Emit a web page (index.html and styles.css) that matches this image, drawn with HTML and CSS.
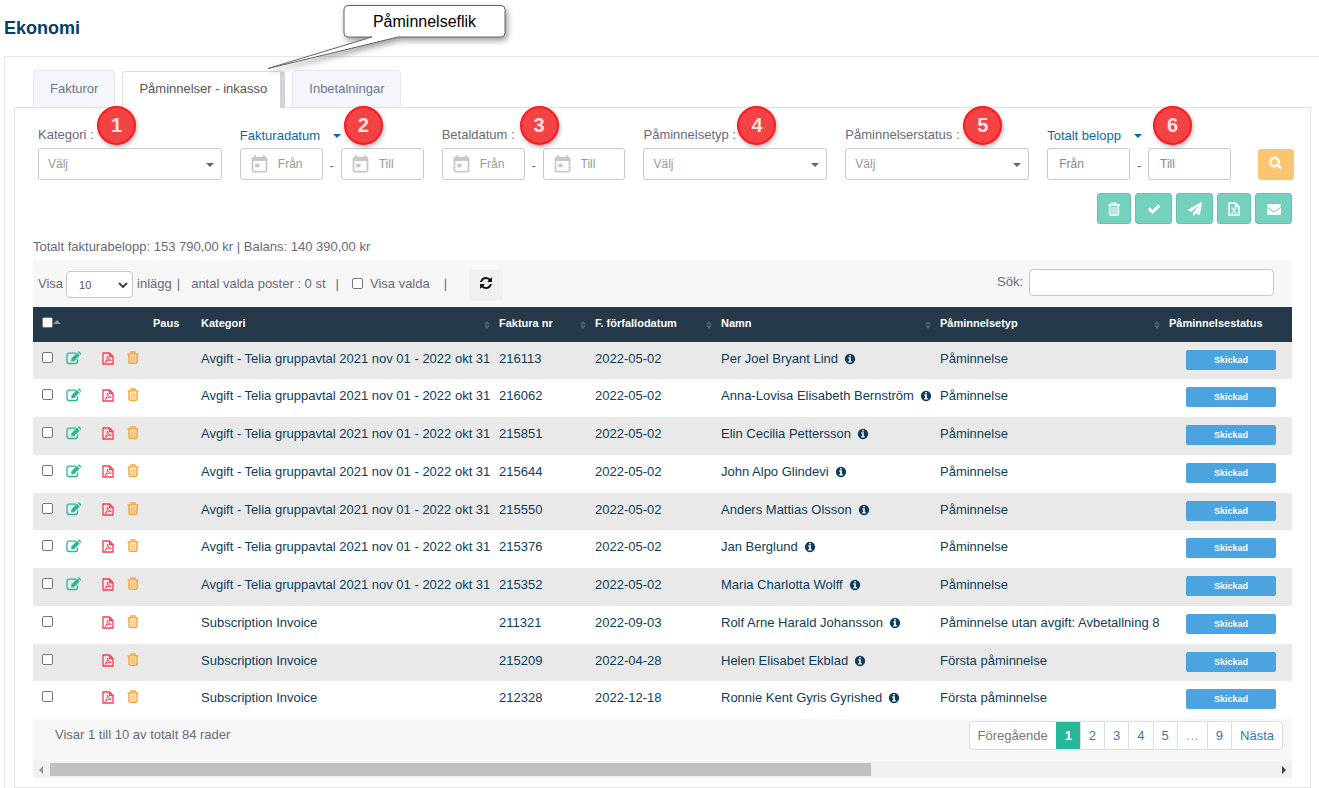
FILE: index.html
```html
<!DOCTYPE html>
<html lang="sv">
<head>
<meta charset="utf-8">
<title>Ekonomi</title>
<link rel="stylesheet" href="styles.css">
</head>
<body>
<svg class="sprite" aria-hidden="true">
  <symbol id="i-search" viewBox="0 0 1792 1792"><path stroke="currentColor" stroke-width="90" d="M1216 832q0-185-131.500-316.500T768 384 451.500 515.500 320 832t131.500 316.500T768 1280t316.500-131.500T1216 832zm512 832q0 52-38 90t-90 38q-54 0-90-38l-343-342q-179 124-399 124-143 0-273.500-55.500t-225-150-150-225T64 832t55.500-273.500 150-225 225-150T768 128t273.500 55.500 225 150 150 225T1472 832q0 220-124 399l343 343q37 37 37 90z"/></symbol>
  <symbol id="i-check" viewBox="0 0 1792 1792"><path d="M1671 566q0 40-28 68l-724 724-136 136q-28 28-68 28t-68-28l-136-136-362-362q-28-28-28-68t28-68l136-136q28-28 68-28t68 28l294 295 656-657q28-28 68-28t68 28l136 136q28 28 28 68z"/></symbol>
  <symbol id="i-mail" viewBox="0 0 1792 1792"><path d="M1792 710v794q0 66-47 113t-113 47H160q-66 0-113-47T0 1504V710q44 49 101 87 362 246 497 345 57 42 92.500 65.500t94.500 48 110 24.500h2q51 0 110-24.500t94.500-48 92.500-65.500q170-123 498-345 57-39 100-87zm0-294q0 79-49 151t-122 123q-376 261-468 325-10 7-42.500 30.500t-54 38-52 32.500-57.500 27-50 9h-2q-23 0-50-9t-57.500-27-52-32.500-54-38T639 1015q-91-64-262-182.500T172 690q-62-42-117-115.500T0 438q0-78 41.500-130T160 256h1472q65 0 112.500 47t47.500 113z"/></symbol>
  <symbol id="i-trash" viewBox="0 0 12 13"><path d="M.5 2.800h11M4 2.500V1h4v1.500" fill="none" stroke="currentColor" stroke-width="1.300"/><path d="M2 3v8q0 1.200 1.200 1.200h5.600Q10 12.200 10 11V3" fill="none" stroke="currentColor" stroke-width="1.500"/><path d="M4.200 4.500V11M6 4.500V11M7.800 4.500V11" fill="none" stroke="currentColor" stroke-width=".9"/></symbol>
  <symbol id="i-plane" viewBox="0 0 1792 1792"><path d="M1764 11q33 24 27 64l-256 1536q-5 29-32 45-14 8-31 8-11 0-24-5l-453-185-242 295q-18 23-49 23-13 0-22-4-19-7-30.500-23.500T640 1728v-349l864-1059-1069 925-395-162q-37-14-40-55-2-40 32-59L1696 9q15-9 32-9 20 0 36 11z"/></symbol>
  <symbol id="i-refresh" viewBox="0 0 1792 1792"><path d="M1639 1056q0 5-1 7-64 268-268 434.500T892 1664q-146 0-282.500-55T366 1452l-129 129q-19 19-45 19t-45-19-19-45v-448q0-26 19-45t45-19h448q26 0 45 19t19 45-19 45l-137 137q71 66 161 102t187 36q134 0 250-65t186-179q11-17 53-117 8-23 30-23h192q13 0 22.500 9.500t9.500 22.500zm25-800v448q0 26-19 45t-45 19h-448q-26 0-45-19t-19-45 19-45l138-138q-148-137-349-137-134 0-250 65T460 628q-11 17-53 117-8 23-30 23H178q-13 0-22.500-9.500T146 736v-7q65-268 270-434.500T896 128q146 0 284 55.500T1425 340l130-129q19-19 45-19t45 19 19 45z"/></symbol>
  <symbol id="i-info" viewBox="0 0 1792 1792"><path d="M1152 1376v-160q0-14-9-23t-23-9h-96V672q0-14-9-23t-23-9H672q-14 0-23 9t-9 23v160q0 14 9 23t23 9h96v320h-96q-14 0-23 9t-9 23v160q0 14 9 23t23 9h448q14 0 23-9t9-23zm-128-896V320q0-14-9-23t-23-9H800q-14 0-23 9t-9 23v160q0 14 9 23t23 9h192q14 0 23-9t9-23zm640 416q0 209-103 385.500T1281.500 1561 896 1664t-385.500-103T231 1281.500 128 896t103-385.500T510.500 231 896 128t385.500 103T1561 510.500 1664 896z"/></symbol>
  <symbol id="i-edit" viewBox="0 0 15 14"><path d="M10 2.200H3Q1 2.200 1 4v6.500q0 2 2 2h6.500q2 0 2-2V8.500" fill="none" stroke="currentColor" stroke-width="1.300"/><path d="M5.300 10.200V7.500L11 1.800l2.700 2.700L8 10.200zM11.700 1.100l.6-.6q.5-.4 1 0L15 2.200q.4.500 0 1l-.6.600z"/></symbol>
  <symbol id="i-pdf" viewBox="0 0 12 13"><path d="M1 1h6.500L11 4.500V12H1zM7.500 1v3.500H11" fill="none" stroke="currentColor" stroke-width="1.300"/><path d="M5.300 4c.8 2.300 2 4 4 4.300-2-.3-4.800.5-6.500 2.200C4.500 9.500 5.900 6.200 5.300 4z" fill="none" stroke="currentColor" stroke-width=".9"/></symbol>
  <symbol id="i-excel" viewBox="0 0 12 14"><path d="M1 1h6.500L11 4.500V13H1zM7.500 1v3.500H11" fill="none" stroke="currentColor" stroke-width="1.500"/><path d="M3.200 6h2M6.800 6h2M3.200 11h2M6.800 11h2M4.200 6l3.600 5M7.800 6l-3.600 5" fill="none" stroke="currentColor" stroke-width="1.200"/></symbol>
  <symbol id="i-cal" viewBox="0 0 24 24"><path d="M19 3h-1V1h-2v2H8V1H6v2H5c-1.100 0-2 .9-2 2v14a2 2 0 0 0 2 2h14a2 2 0 0 0 2-2V5a2 2 0 0 0-2-2zm0 16H5V8h14v11zM7 11h5v4H7z"/></symbol>
  <symbol id="i-down" viewBox="0 0 8 4"><path d="M0 0h8L4 4z"/></symbol>
  <symbol id="i-up" viewBox="0 0 8 4"><path d="M0 4h8L4 0z"/></symbol>
  <symbol id="i-sort" viewBox="0 0 6 8"><path d="M0 3.500h6L3 0zM0 4.500h6L3 8z"/></symbol>
  <symbol id="i-chev" viewBox="0 0 10 6"><path d="M1 1l4 4 4-4" fill="none" stroke="currentColor" stroke-width="2"/></symbol>
</svg>

<header class="page-head"><h1>Ekonomi</h1></header>

<div class="callout">
  <svg class="callout-shape" viewBox="0 0 260 80" aria-hidden="true"><path d="M88 5.500H241q4 0 4 4V33q0 4-4 4H138L8 68.500 112 37H88q-4 0-4-4V9.500q0-4 4-4z"/></svg>
  <span class="callout-text">Påminnelseflik</span>
</div>

<main class="outer">
  <nav class="tabs">
    <a class="tab" href="#">Fakturor</a>
    <a class="tab active" href="#">Påminnelser - inkasso</a>
    <a class="tab" href="#">Inbetalningar</a>
  </nav>

  <section class="panel">
    <form class="filters">
      <div class="filter">
        <label for="kat">Kategori :</label><span class="pin pin-1">1</span>
        <div class="pick"><select id="kat"><option>Välj</option></select><svg><use href="#i-down"/></svg></div>
      </div>
      <div class="filter">
        <button type="button" class="switch">Fakturadatum<svg><use href="#i-down"/></svg></button><span class="pin pin-2">2</span>
        <div class="range">
          <div class="date"><svg><use href="#i-cal"/></svg><input aria-label="Fakturadatum från" placeholder="Från"></div>
          <span class="dash">-</span>
          <div class="date"><svg><use href="#i-cal"/></svg><input aria-label="Fakturadatum till" placeholder="Till"></div>
        </div>
      </div>
      <div class="filter">
        <label for="bet">Betaldatum :</label><span class="pin pin-3">3</span>
        <div class="range">
          <div class="date"><svg><use href="#i-cal"/></svg><input id="bet" placeholder="Från"></div>
          <span class="dash">-</span>
          <div class="date"><svg><use href="#i-cal"/></svg><input aria-label="Betaldatum till" placeholder="Till"></div>
        </div>
      </div>
      <div class="filter">
        <label for="typ">Påminnelsetyp :</label><span class="pin pin-4">4</span>
        <div class="pick"><select id="typ"><option>Välj</option></select><svg><use href="#i-down"/></svg></div>
      </div>
      <div class="filter">
        <label for="status">Påminnelserstatus :</label><span class="pin pin-5">5</span>
        <div class="pick"><select id="status"><option>Välj</option></select><svg><use href="#i-down"/></svg></div>
      </div>
      <div class="filter">
        <button type="button" class="switch">Totalt belopp<svg><use href="#i-down"/></svg></button><span class="pin pin-6">6</span>
        <div class="range amount">
          <div class="date"><input aria-label="Belopp från" placeholder="Från"></div>
          <span class="dash">-</span>
          <div class="date"><input aria-label="Belopp till" placeholder="Till"></div>
        </div>
      </div>
      <button type="button" class="search-btn" aria-label="Sök"><svg><use href="#i-search"/></svg></button>
    </form>

    <div class="actions">
      <button type="button" aria-label="Ta bort"><svg><use href="#i-trash"/></svg></button>
      <button type="button" class="wide" aria-label="Godkänn"><svg><use href="#i-check"/></svg></button>
      <button type="button" class="wide" aria-label="Skicka"><svg><use href="#i-plane"/></svg></button>
      <button type="button" aria-label="Excel"><svg><use href="#i-excel"/></svg></button>
      <button type="button" class="wide" aria-label="E-post"><svg><use href="#i-mail"/></svg></button>
    </div>

    <p class="summary">Totalt fakturabelopp: 153 790,00 kr | Balans: 140 390,00 kr</p>

    <div class="grid">
      <div class="toolbar">
        <label for="len">Visa</label>
        <div class="length"><select id="len"><option>10</option></select><svg><use href="#i-chev"/></svg></div>
        <span class="entries">inlägg</span><span>|</span>
        <span class="count">antal valda poster : 0 st</span><span class="bar">|</span>
        <label class="only"><input type="checkbox">Visa valda</label><span class="bar">|</span>
        <button type="button" class="reload" aria-label="Uppdatera"><svg><use href="#i-refresh"/></svg></button>
        <label class="find">Sök:<input type="search"></label>
      </div>

      <table>
        <colgroup><col class="c-check"><col class="c-edit"><col class="c-pdf"><col class="c-del"><col class="c-paus"><col class="c-kat"><col class="c-nr"><col class="c-date"><col class="c-name"><col class="c-typ"><col class="c-status"></colgroup>
        <thead>
          <tr>
            <th class="all"><input type="checkbox" aria-label="Välj alla"><svg><use href="#i-up"/></svg></th><th></th><th></th><th></th>
            <th>Paus</th>
            <th>Kategori<svg class="sort"><use href="#i-sort"/></svg></th>
            <th>Faktura nr<svg class="sort"><use href="#i-sort"/></svg></th>
            <th>F. förfallodatum<svg class="sort"><use href="#i-sort"/></svg></th>
            <th>Namn<svg class="sort"><use href="#i-sort"/></svg></th>
            <th>Påminnelsetyp<svg class="sort"><use href="#i-sort"/></svg></th>
            <th>Påminnelsestatus</th>
          </tr>
        </thead>
        <tbody>
          <tr><td><input type="checkbox" aria-label="Välj 216113"></td><td><svg class="edit"><use href="#i-edit"/></svg></td><td><svg class="pdf"><use href="#i-pdf"/></svg></td><td><svg class="del"><use href="#i-trash"/></svg></td><td></td><td>Avgift - Telia gruppavtal 2021 nov 01 - 2022 okt 31</td><td>216113</td><td>2022-05-02</td><td>Per Joel Bryant Lind<svg class="info"><use href="#i-info"/></svg></td><td>Påminnelse</td><td><span class="badge">Skickad</span></td></tr>
          <tr><td><input type="checkbox" aria-label="Välj 216062"></td><td><svg class="edit"><use href="#i-edit"/></svg></td><td><svg class="pdf"><use href="#i-pdf"/></svg></td><td><svg class="del"><use href="#i-trash"/></svg></td><td></td><td>Avgift - Telia gruppavtal 2021 nov 01 - 2022 okt 31</td><td>216062</td><td>2022-05-02</td><td>Anna-Lovisa Elisabeth Bernström<svg class="info"><use href="#i-info"/></svg></td><td>Påminnelse</td><td><span class="badge">Skickad</span></td></tr>
          <tr><td><input type="checkbox" aria-label="Välj 215851"></td><td><svg class="edit"><use href="#i-edit"/></svg></td><td><svg class="pdf"><use href="#i-pdf"/></svg></td><td><svg class="del"><use href="#i-trash"/></svg></td><td></td><td>Avgift - Telia gruppavtal 2021 nov 01 - 2022 okt 31</td><td>215851</td><td>2022-05-02</td><td>Elin Cecilia Pettersson<svg class="info"><use href="#i-info"/></svg></td><td>Påminnelse</td><td><span class="badge">Skickad</span></td></tr>
          <tr><td><input type="checkbox" aria-label="Välj 215644"></td><td><svg class="edit"><use href="#i-edit"/></svg></td><td><svg class="pdf"><use href="#i-pdf"/></svg></td><td><svg class="del"><use href="#i-trash"/></svg></td><td></td><td>Avgift - Telia gruppavtal 2021 nov 01 - 2022 okt 31</td><td>215644</td><td>2022-05-02</td><td>John Alpo Glindevi<svg class="info"><use href="#i-info"/></svg></td><td>Påminnelse</td><td><span class="badge">Skickad</span></td></tr>
          <tr><td><input type="checkbox" aria-label="Välj 215550"></td><td><svg class="edit"><use href="#i-edit"/></svg></td><td><svg class="pdf"><use href="#i-pdf"/></svg></td><td><svg class="del"><use href="#i-trash"/></svg></td><td></td><td>Avgift - Telia gruppavtal 2021 nov 01 - 2022 okt 31</td><td>215550</td><td>2022-05-02</td><td>Anders Mattias Olsson<svg class="info"><use href="#i-info"/></svg></td><td>Påminnelse</td><td><span class="badge">Skickad</span></td></tr>
          <tr><td><input type="checkbox" aria-label="Välj 215376"></td><td><svg class="edit"><use href="#i-edit"/></svg></td><td><svg class="pdf"><use href="#i-pdf"/></svg></td><td><svg class="del"><use href="#i-trash"/></svg></td><td></td><td>Avgift - Telia gruppavtal 2021 nov 01 - 2022 okt 31</td><td>215376</td><td>2022-05-02</td><td>Jan Berglund<svg class="info"><use href="#i-info"/></svg></td><td>Påminnelse</td><td><span class="badge">Skickad</span></td></tr>
          <tr><td><input type="checkbox" aria-label="Välj 215352"></td><td><svg class="edit"><use href="#i-edit"/></svg></td><td><svg class="pdf"><use href="#i-pdf"/></svg></td><td><svg class="del"><use href="#i-trash"/></svg></td><td></td><td>Avgift - Telia gruppavtal 2021 nov 01 - 2022 okt 31</td><td>215352</td><td>2022-05-02</td><td>Maria Charlotta Wolff<svg class="info"><use href="#i-info"/></svg></td><td>Påminnelse</td><td><span class="badge">Skickad</span></td></tr>
          <tr><td><input type="checkbox" aria-label="Välj 211321"></td><td></td><td><svg class="pdf"><use href="#i-pdf"/></svg></td><td><svg class="del"><use href="#i-trash"/></svg></td><td></td><td>Subscription Invoice</td><td>211321</td><td>2022-09-03</td><td>Rolf Arne Harald Johansson<svg class="info"><use href="#i-info"/></svg></td><td>Påminnelse utan avgift: Avbetallning 8</td><td><span class="badge">Skickad</span></td></tr>
          <tr><td><input type="checkbox" aria-label="Välj 215209"></td><td></td><td><svg class="pdf"><use href="#i-pdf"/></svg></td><td><svg class="del"><use href="#i-trash"/></svg></td><td></td><td>Subscription Invoice</td><td>215209</td><td>2022-04-28</td><td>Helen Elisabet Ekblad<svg class="info"><use href="#i-info"/></svg></td><td>Första påminnelse</td><td><span class="badge">Skickad</span></td></tr>
          <tr><td><input type="checkbox" aria-label="Välj 212328"></td><td></td><td><svg class="pdf"><use href="#i-pdf"/></svg></td><td><svg class="del"><use href="#i-trash"/></svg></td><td></td><td>Subscription Invoice</td><td>212328</td><td>2022-12-18</td><td>Ronnie Kent Gyris Gyrished<svg class="info"><use href="#i-info"/></svg></td><td>Första påminnelse</td><td><span class="badge">Skickad</span></td></tr>
        </tbody>
      </table>

      <div class="foot">
        <span>Visar 1 till 10 av totalt 84 rader</span>
        <nav class="pages">
          <a class="off" href="#">Föregående</a><a class="on" href="#">1</a><a href="#">2</a><a href="#">3</a><a href="#">4</a><a href="#">5</a><a class="off gap" href="#">…</a><a href="#">9</a><a href="#">Nästa</a>
        </nav>
      </div>
      <div class="scroll">
        <svg class="left" viewBox="0 0 4 8"><path d="M4 0v8L0 4z"/></svg>
        <div class="track"><div class="thumb"></div></div>
        <svg viewBox="0 0 4 8"><path d="M0 0v8l4-4z"/></svg>
      </div>
    </div>
  </section>
</main>
</body>
</html>
```

FILE: styles.css
```css
* { box-sizing: border-box; }
body {
  margin: 0;
  background: #fff;
  color: #676a7c;
  font: 13px/18px "Liberation Sans", Arial, sans-serif;
}
button, input, select { font: inherit; color: inherit; margin: 0; }
button { cursor: pointer; padding: 0; }
a { text-decoration: none; color: inherit; }
svg { fill: currentColor; }
.sprite { position: absolute; width: 0; height: 0; }

.page-head { height: 56px; padding: 16px 4px 0; }
h1 { margin: 0; font-size: 18px; line-height: 24px; color: #034069; }

.callout { position: absolute; left: 260px; top: 0; width: 260px; height: 80px; z-index: 2; }
.callout-shape { display: block; width: 260px; height: 80px; filter: drop-shadow(2px 3px 3px rgba(0, 0, 0, .4)); }
.callout-shape path { fill: #fff; stroke: #666; }
.callout-text { position: absolute; left: 84px; right: 15px; top: 6px; text-align: center; font-size: 16px; line-height: 32px; color: #000; }

.outer { margin-left: 4px; border: 1px solid #e7e7e7; border-width: 1px 0 0 1px; padding: 13px 8px 0 9px; }
.tabs { display: flex; align-items: flex-end; gap: 7px; padding-left: 19px; }
.tab { height: 37px; padding: 9px 16px 0; border: 1px solid #e7e8ee; border-bottom: 0; border-radius: 4px 4px 0 0; background: #f4f6fb; color: #6b7590; }
.tab.active { position: relative; margin-bottom: -1px; padding: 8px 13px 0 16px; border-color: #ddd; border-right: 5px solid #d1d4dc; background: #fff; color: #555; }

.panel { border: 1px solid #e1e1e1; padding: 18px 16px 9px 18px; }
.filters { display: grid; grid-template-columns: repeat(6, minmax(0, 1fr)) 45px; column-gap: 18px; padding-left: 5px; }
.filter { position: relative; }
.filter > label { display: block; height: 22px; line-height: 17px; }
.switch { display: flex; align-items: center; gap: 13px; height: 22px; padding-bottom: 3px; border: 0; background: none; color: #0769ad; }
.switch svg { width: 8px; height: 4px; }
.pick { position: relative; }
.pick select { display: block; width: 100%; height: 32px; padding: 0 9px; border: 1px solid #c8c8c8; border-radius: 3px; background: #fff; appearance: none; color: #999; font-size: 12px; }
.pick svg { position: absolute; right: 8px; top: 15px; width: 8px; height: 4px; color: #666; }
.range { display: grid; grid-template-columns: 1fr 18px 1fr; align-items: center; }
.dash { text-align: center; padding-top: 4px; }
.date { display: flex; align-items: center; gap: 8px; height: 32px; padding-left: 8px; border: 1px solid #c8c8c8; border-radius: 3px; background: #fff; font-size: 12px; }
.date svg { flex: none; width: 21px; height: 21px; color: #c8c8c8; }
.date input { min-width: 0; width: 100%; padding: 0; border: 0; background: none; outline: 0; }
.date input::placeholder { color: #999; }
.amount .date { padding-left: 11px; }
.amount input::placeholder { color: #888; }
.search-btn { align-self: end; justify-self: end; width: 36px; height: 31px; border: 0; border-radius: 3px; background: #fcc571; color: #fff; }
.search-btn svg { width: 13px; height: 13px; }

.pin { position: absolute; top: -20px; width: 39px; height: 39px; border: 2px solid #fe1a1e; border-radius: 50%; background: #f44345; box-shadow: 1px 2px 4px rgba(0, 0, 0, .3); color: #fde0e0; font-size: 20px; font-weight: bold; line-height: 35px; text-align: center; }
.pin-1 { left: 59px; }
.pin-2 { left: 104px; }
.pin-3 { left: 78px; }
.pin-4 { left: 94px; }
.pin-5 { left: 118px; }
.pin-6 { left: 106px; }

.actions { display: flex; justify-content: flex-end; gap: 4px; margin: 13px 2px 0 0; }
.actions button { width: 34px; height: 31px; border: 1px solid #66c2ae; border-radius: 3px; background: #74d1be; color: #fff; }
.actions .wide { width: 37px; }
.actions svg { width: 14px; height: 14px; vertical-align: middle; }
.summary { margin: 14px 0 4px; }

.grid { margin-right: 2px; background: #f7f7f7; }
.toolbar { display: flex; align-items: center; height: 47px; padding: 0 18px 0 5px; }
.length { position: relative; margin: 2px 4px 0 3px; }
.length select { display: block; width: 67px; height: 27px; padding: 0 12px; border: 1px solid #c8c8c8; border-radius: 4px; background: #fff; appearance: none; color: #555; font-size: 11px; }
.length svg { position: absolute; right: 5px; top: 11px; width: 10px; height: 6px; color: #444; }
.entries { margin-right: 5px; }
.count { margin: 0 10px 0 11px; }
.only { display: flex; align-items: center; gap: 7px; margin: 0 14px 0 13px; }
.reload { width: 34px; height: 31px; margin: 3px 0 0 22px; border: 0; border-radius: 3px; background: #f0f0f0; color: #111; }
.reload svg { width: 14px; height: 14px; margin-bottom: 4px; vertical-align: middle; }
.find { display: flex; align-items: center; gap: 6px; margin: 0 0 3px auto; }
.find input { width: 245px; height: 27px; border: 1px solid #c8c8c8; border-radius: 4px; background: #fff; }
input[type="checkbox"] { appearance: none; flex: none; width: 11px; height: 11px; border: 1px solid #767676; border-radius: 2px; background: #fff; }

table { width: 100%; table-layout: fixed; border-collapse: collapse; background: #fff; color: #0d3d5c; }
.c-check { width: 25px; }
.c-edit { width: 36px; }
.c-pdf { width: 25px; }
.c-del { width: 26px; }
.c-paus { width: 48px; }
.c-kat { width: 298px; }
.c-nr { width: 96px; }
.c-date { width: 126px; }
.c-name { width: 219px; }
.c-typ { width: 229px; }
.c-status { width: 131px; }
thead { background: #243949; color: #fff; }
th { position: relative; height: 35px; padding: 7px 8px 10px; text-align: left; vertical-align: top; font-size: 11px; white-space: nowrap; }
.all { padding-left: 9px; }
.all svg { width: 8px; height: 4px; margin-bottom: 3px; color: #8d98a1; }
.all input { vertical-align: -1px; }
.sort { position: absolute; right: 1px; top: 14px; width: 6px; height: 8px; color: #56646f; }
td { height: 38px; padding: 8px 8px 0; vertical-align: top; white-space: nowrap; }
tbody tr:nth-child(odd) { background: #e9e9e9; }
tbody tr:nth-child(4n+1) td { height: 37px; }
td svg { display: block; }
td input[type="checkbox"] { display: block; margin: 2px 0 0 1px; }
.edit { width: 15px; height: 14px; margin-top: 1px; color: #26b899; }
.pdf { width: 12px; height: 13px; margin-top: 2px; color: #fb3b50; }
.del { width: 12px; height: 13px; margin-top: 1px; color: #f7a533; }
td .info { display: inline-block; width: 12px; height: 12px; margin-left: 6px; vertical-align: -2px; }
.badge { display: block; width: 90px; height: 20px; margin-left: 17px; border-radius: 2px; background: #4ba3df; color: #fff; font-size: 9px; font-weight: bold; line-height: 20px; text-align: center; }

.foot { display: flex; justify-content: space-between; height: 42px; padding: 2px 9px 0 22px; line-height: 27px; }
.pages { display: flex; height: 29px; border: 1px solid #ddd; border-radius: 4px; background: #fff; overflow: hidden; color: #337ab7; }
.pages a { padding: 0 8px; }
.pages a + a { border-left: 1px solid #ddd; }
.pages .off { color: #777; }
.pages .gap { color: #999; }
.pages .on { border-color: #26b899; background: #26b899; color: #fff; font-weight: bold; }
.scroll { display: flex; align-items: center; height: 17px; padding: 0 6px; background: #f0f0f0; color: #444; }
.scroll svg { width: 4px; height: 8px; }
.scroll .left { color: #999; }
.track { flex: 1; padding: 0 7px; }
.thumb { width: 67%; height: 13px; background: #c0c0c0; }
```
